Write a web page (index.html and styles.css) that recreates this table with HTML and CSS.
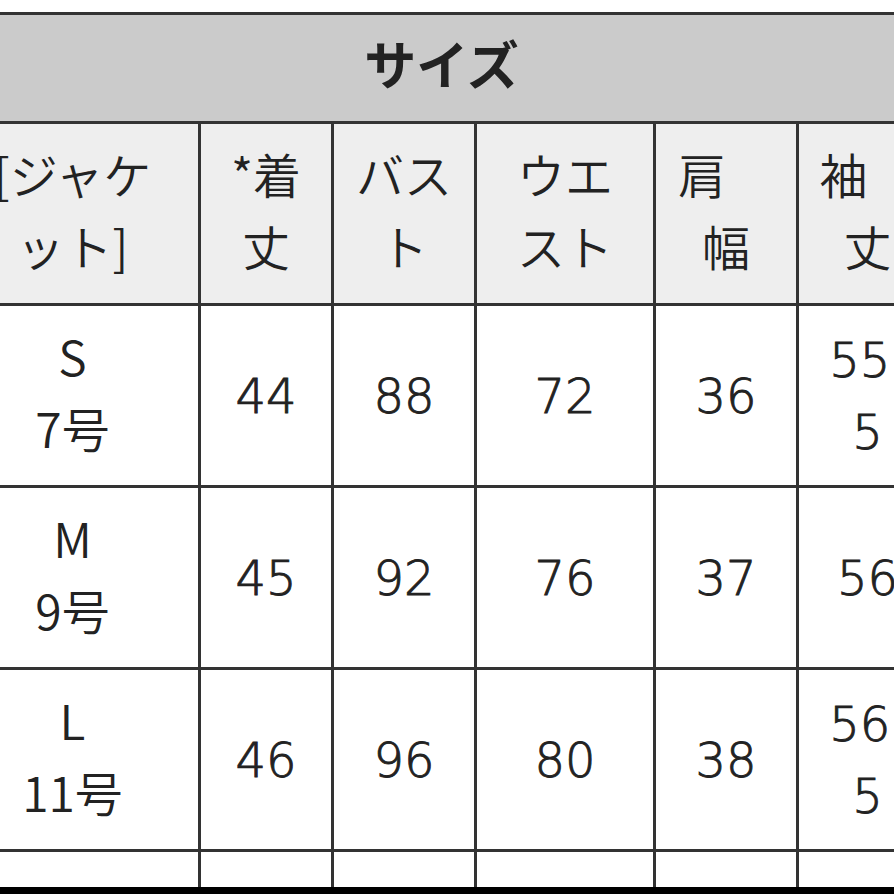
FILE: index.html
```html
<!DOCTYPE html>
<html lang="ja">
<head>
<meta charset="utf-8">
<title>サイズ</title>
<link rel="stylesheet" href="styles.css">
</head>
<body>
<div class="screen">
  <div class="viewport">
    <table class="size-table">
      <colgroup>
        <col class="c1"><col class="c2"><col class="c3"><col class="c4"><col class="c5"><col class="c6">
      </colgroup>
      <thead>
        <tr class="title-row"><th colspan="6">サイズ</th></tr>
        <tr class="head-row">
          <th class="first">[ジャケット]</th>
          <th>*着丈</th>
          <th>バスト</th>
          <th>ウエスト</th>
          <th class="keep">肩　幅</th>
          <th class="keep">袖　丈</th>
        </tr>
      </thead>
      <tbody>
        <tr><td class="first">S<br>7号</td><td class="num">44</td><td class="num">88</td><td class="num">72</td><td class="num">36</td><td class="num">55.5</td></tr>
        <tr><td class="first">M<br>9号</td><td class="num">45</td><td class="num">92</td><td class="num">76</td><td class="num">37</td><td class="num">56</td></tr>
        <tr><td class="first">L<br>11号</td><td class="num">46</td><td class="num">96</td><td class="num">80</td><td class="num">38</td><td class="num">56.5</td></tr>
        <tr><td class="first">LL<br>13号</td><td class="num">47</td><td class="num">100</td><td class="num">84</td><td class="num">39</td><td class="num">57</td></tr>
      </tbody>
    </table>
  </div>
  <div class="navbar"></div>
</div>
</body>
</html>
```
FILE: styles.css
```css
html, body {
  margin: 0;
  padding: 0;
  background: #ffffff;
}
.screen {
  width: 894px;
  height: 894px;
  overflow: hidden;
  display: flex;
  flex-direction: column;
}
.viewport {
  height: 887px;
  overflow: hidden;
  padding-top: 12px;
  box-sizing: border-box;
}
.navbar {
  height: 7px;
  background: #000000;
}
.size-table {
  margin-left: -56px;
  width: 995px;
  table-layout: fixed;
  border-collapse: collapse;
  font-family: "Noto Sans CJK JP", "Noto Sans", sans-serif;
  color: #222222;
  font-size: 48px;
  line-height: 72px;
}
.c1 { width: 254px; }
.c2 { width: 133px; }
.c3 { width: 143px; }
.c4 { width: 179px; }
.c5 { width: 143px; }
.c6 { width: 140px; }
.size-table th,
.size-table td {
  border: 3px solid #333333;
  padding: 0 20px 10px;
  text-align: center;
  vertical-align: middle;
  font-weight: 350;
  word-break: break-all;
  line-break: loose;
}
.size-table .first {
  padding-left: 24px;
  padding-right: 24px;
}
.title-row th {
  background: #cbcbcb;
  font-weight: 700;
  font-size: 52px;
  height: 96px;
}
.head-row th {
  background: #eeeeee;
  height: 169px;
}
.size-table tbody td {
  background: #ffffff;
  height: 169px;
}
.size-table tbody td.num {
  font-family: "DejaVu Sans", "Noto Sans CJK JP", sans-serif;
  font-weight: 300;
  -webkit-text-stroke: 0.9px #222222;
  padding-bottom: 0;
  height: 179px;
}
.keep {
  white-space: break-spaces;
}
```
